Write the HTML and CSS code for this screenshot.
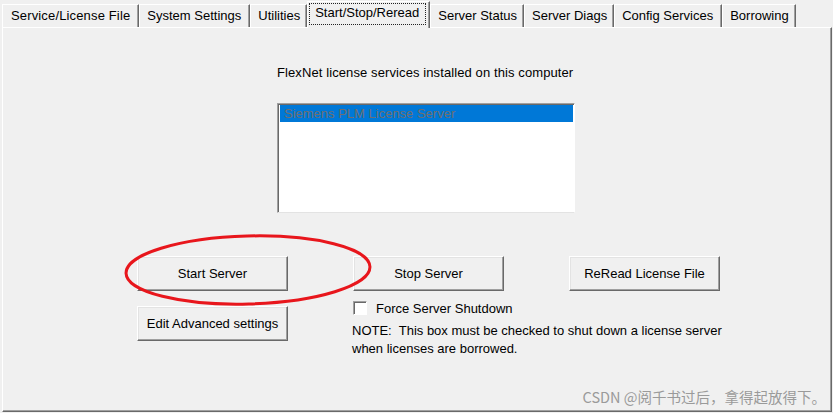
FILE: index.html
```html
<!DOCTYPE html>
<html lang="en">
<head>
<meta charset="utf-8">
<title>LMTOOLS - Start/Stop/Reread</title>
<link rel="stylesheet" href="styles.css">
</head>
<body>
<div class="window">
  <div class="tabs">
    <div class="tab tab-wide">Service/License File</div>
    <div class="tab tab-mid">System Settings</div>
    <div class="tab">Utilities</div>
    <div class="tab active"><span class="focus">Start/Stop/Reread</span></div>
    <div class="tab">Server Status</div>
    <div class="tab">Server Diags</div>
    <div class="tab tab-mid">Config Services</div>
    <div class="tab">Borrowing</div>
  </div>
  <div class="panel">
    <div class="services">
      <p class="caption">FlexNet license services installed on this computer</p>
      <div class="listbox">
        <div class="item selected">Siemens PLM License Server</div>
      </div>
    </div>
    <div class="actions">
      <button class="btn">Start Server</button>
      <button class="btn">Stop Server</button>
      <button class="btn">ReRead License File</button>
      <button class="btn edit">Edit Advanced settings</button>
      <div class="options">
        <label class="check"><span class="box"></span><span>Force Server Shutdown</span></label>
        <p class="note">NOTE:&nbsp; This box must be checked to shut down a license server<br>when licenses are borrowed.</p>
      </div>
    </div>
    <svg class="mark" width="260" height="84" viewBox="0 0 260 84">
      <ellipse cx="128" cy="41" rx="122" ry="34" fill="none" stroke="#e8161c" stroke-width="3" transform="rotate(-1.5 128 41)"/>
    </svg>
    <div class="watermark">CSDN @阅千书过后，拿得起放得下。</div>
  </div>
</div>
</body>
</html>
```

FILE: styles.css
```css
html, body {
  margin: 0;
  padding: 0;
  background: #f0f0f0;
}

body {
  width: 833px;
  height: 413px;
  overflow: hidden;
  font-family: "Liberation Sans", Arial, sans-serif;
  font-size: 13px;
  color: #000;
}

.tabs {
  display: flex;
  align-items: flex-end;
  height: 27px;
  padding-left: 2px;
  position: relative;
  z-index: 2;
}

.tab {
  height: 23px;
  box-sizing: border-box;
  padding: 3px 6px 0 7px;
  line-height: 15px;
  border-top: 1px solid #fff;
  border-left: 1px solid #fff;
  border-right: 1px solid #696969;
  box-shadow: inset -1px 0 #a0a0a0;
  white-space: nowrap;
  background: #f0f0f0;
}

.tab-wide {
  padding-left: 8px;
  padding-right: 8px;
  letter-spacing: 0.15px;
}

.tab-mid {
  padding-left: 7px;
  padding-right: 8px;
}

.tab.active {
  height: 27px;
  margin-bottom: -1px;
  padding: 1px 3px 0 1px;
}

.focus {
  display: block;
  border: 1px dotted #222;
  padding: 1px 6px 4px 5px;
  line-height: 15px;
}

.panel {
  position: relative;
  height: 385px;
  width: 830px;
  margin-left: 2px;
  box-sizing: border-box;
  border-top: 1px solid #fff;
  border-left: 1px solid #fff;
  border-right: 1px solid #696969;
  border-bottom: 1px solid #696969;
  box-shadow: inset -1px -1px #a0a0a0;
}

.services {
  padding: 37px 0 0 274px;
}

.caption {
  margin: 0;
  line-height: 15px;
  letter-spacing: 0.1px;
}

.listbox {
  margin-top: 23px;
  width: 298px;
  height: 110px;
  box-sizing: border-box;
  background: #fff;
  border-top: 1px solid #a0a0a0;
  border-left: 1px solid #a0a0a0;
  border-right: 1px solid #fff;
  border-bottom: 1px solid #e3e3e3;
  box-shadow: inset 1px 1px #696969;
  padding: 1px 1px 0 2px;
}

.item {
  height: 17px;
  line-height: 17px;
  padding-left: 4px;
}

.item.selected {
  background: #0078d7;
  color: #6f6f6f;
}

.actions {
  display: grid;
  grid-template-columns: 151px 151px 151px;
  column-gap: 65px;
  padding: 43px 0 0 134px;
  align-items: start;
}

.btn {
  width: 151px;
  height: 35px;
  box-sizing: border-box;
  margin: 0;
  padding: 0;
  font: inherit;
  color: #000;
  background: #f0f0f0;
  border: 1px solid;
  border-color: #fff #696969 #696969 #fff;
  box-shadow: inset -1px -1px #a0a0a0, inset 1px 1px #e3e3e3;
}

.btn.edit {
  margin-top: 15px;
}

.options {
  grid-column: 2 / -1;
  padding-top: 10px;
}

.check {
  display: flex;
  align-items: center;
  gap: 9px;
  height: 14px;
  line-height: 15px;
}

.box {
  width: 14px;
  height: 14px;
  box-sizing: border-box;
  background: #fff;
  border-top: 1px solid #a0a0a0;
  border-left: 1px solid #a0a0a0;
  border-right: 1px solid #fff;
  border-bottom: 1px solid #fff;
  box-shadow: inset 1px 1px #696969;
}

.note {
  margin: 7px 0 0 -1px;
  line-height: 18px;
  white-space: nowrap;
}

.mark {
  position: absolute;
  left: 117px;
  top: 201px;
}

.watermark {
  position: absolute;
  right: 5px;
  bottom: 6px;
  font-family: "Noto Sans CJK SC", "Liberation Sans", sans-serif;
  font-size: 14.5px;
  line-height: 16px;
  color: #9a9a9a;
}
```
